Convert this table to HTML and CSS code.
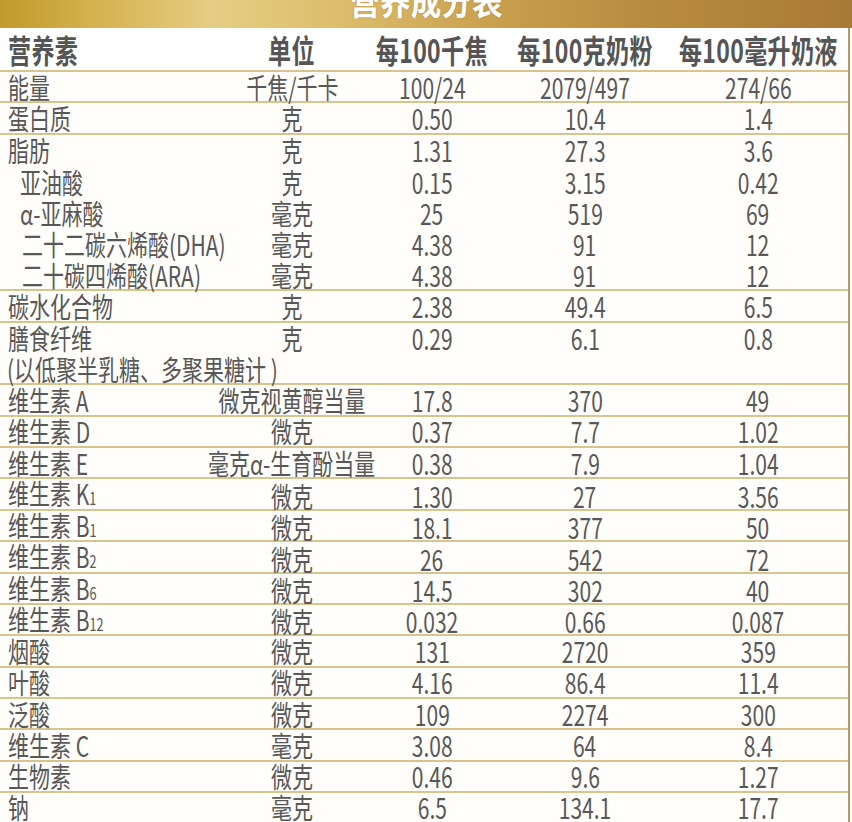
FILE: index.html
```html
<!DOCTYPE html>
<html lang="zh">
<head>
<meta charset="utf-8">
<title>营养成分表</title>
<link rel="stylesheet" href="styles.css">
</head>
<body>
<div class="page">
  <div class="banner"><span class="title">营养成分表</span></div>
  <div class="table">
    <div class="row head sep">
      <div class="c1"><span class="t">营养素</span></div>
      <div class="cc"><span class="t">单位</span></div>
      <div class="cc"><span class="t">每100千焦</span></div>
      <div class="cc"><span class="t">每100克奶粉</span></div>
      <div class="cc"><span class="t">每100毫升奶液</span></div>
    </div>
    <div class="row sep"><div class="c1"><span class="t">能量</span></div><div class="cc"><span class="t">千焦/千卡</span></div><div class="cc"><span class="t">100/24</span></div><div class="cc"><span class="t">2079/497</span></div><div class="cc"><span class="t">274/66</span></div></div>
    <div class="row sep"><div class="c1"><span class="t">蛋白质</span></div><div class="cc"><span class="t">克</span></div><div class="cc"><span class="t">0.50</span></div><div class="cc"><span class="t">10.4</span></div><div class="cc"><span class="t">1.4</span></div></div>
    <div class="row"><div class="c1"><span class="t">脂肪</span></div><div class="cc"><span class="t">克</span></div><div class="cc"><span class="t">1.31</span></div><div class="cc"><span class="t">27.3</span></div><div class="cc"><span class="t">3.6</span></div></div>
    <div class="row"><div class="c1 sub"><span class="t">亚油酸</span></div><div class="cc"><span class="t">克</span></div><div class="cc"><span class="t">0.15</span></div><div class="cc"><span class="t">3.15</span></div><div class="cc"><span class="t">0.42</span></div></div>
    <div class="row"><div class="c1 sub"><span class="t">α-亚麻酸</span></div><div class="cc"><span class="t">毫克</span></div><div class="cc"><span class="t">25</span></div><div class="cc"><span class="t">519</span></div><div class="cc"><span class="t">69</span></div></div>
    <div class="row"><div class="c1 sub2"><span class="t">二十二碳六烯酸(DHA)</span></div><div class="cc"><span class="t">毫克</span></div><div class="cc"><span class="t">4.38</span></div><div class="cc"><span class="t">91</span></div><div class="cc"><span class="t">12</span></div></div>
    <div class="row sep"><div class="c1 sub2"><span class="t">二十碳四烯酸(ARA)</span></div><div class="cc"><span class="t">毫克</span></div><div class="cc"><span class="t">4.38</span></div><div class="cc"><span class="t">91</span></div><div class="cc"><span class="t">12</span></div></div>
    <div class="row sep"><div class="c1"><span class="t">碳水化合物</span></div><div class="cc"><span class="t">克</span></div><div class="cc"><span class="t">2.38</span></div><div class="cc"><span class="t">49.4</span></div><div class="cc"><span class="t">6.5</span></div></div>
    <div class="row"><div class="c1"><span class="t">膳食纤维</span></div><div class="cc"><span class="t">克</span></div><div class="cc"><span class="t">0.29</span></div><div class="cc"><span class="t">6.1</span></div><div class="cc"><span class="t">0.8</span></div></div>
    <div class="row sep"><div class="c1 note"><span class="t">(以低聚半乳糖、多聚果糖计 )</span></div><div class="cc"></div><div class="cc"></div><div class="cc"></div><div class="cc"></div></div>
    <div class="row sep"><div class="c1"><span class="t">维生素 A</span></div><div class="cc"><span class="t">微克视黄醇当量</span></div><div class="cc"><span class="t">17.8</span></div><div class="cc"><span class="t">370</span></div><div class="cc"><span class="t">49</span></div></div>
    <div class="row sep"><div class="c1"><span class="t">维生素 D</span></div><div class="cc"><span class="t">微克</span></div><div class="cc"><span class="t">0.37</span></div><div class="cc"><span class="t">7.7</span></div><div class="cc"><span class="t">1.02</span></div></div>
    <div class="row sep"><div class="c1"><span class="t">维生素 E</span></div><div class="cc"><span class="t">毫克α-生育酚当量</span></div><div class="cc"><span class="t">0.38</span></div><div class="cc"><span class="t">7.9</span></div><div class="cc"><span class="t">1.04</span></div></div>
    <div class="row sep"><div class="c1"><span class="t">维生素 K<small>1</small></span></div><div class="cc"><span class="t">微克</span></div><div class="cc"><span class="t">1.30</span></div><div class="cc"><span class="t">27</span></div><div class="cc"><span class="t">3.56</span></div></div>
    <div class="row sep"><div class="c1"><span class="t">维生素 B<small>1</small></span></div><div class="cc"><span class="t">微克</span></div><div class="cc"><span class="t">18.1</span></div><div class="cc"><span class="t">377</span></div><div class="cc"><span class="t">50</span></div></div>
    <div class="row sep"><div class="c1"><span class="t">维生素 B<small>2</small></span></div><div class="cc"><span class="t">微克</span></div><div class="cc"><span class="t">26</span></div><div class="cc"><span class="t">542</span></div><div class="cc"><span class="t">72</span></div></div>
    <div class="row sep"><div class="c1"><span class="t">维生素 B<small>6</small></span></div><div class="cc"><span class="t">微克</span></div><div class="cc"><span class="t">14.5</span></div><div class="cc"><span class="t">302</span></div><div class="cc"><span class="t">40</span></div></div>
    <div class="row sep"><div class="c1"><span class="t">维生素 B<small>12</small></span></div><div class="cc"><span class="t">微克</span></div><div class="cc"><span class="t">0.032</span></div><div class="cc"><span class="t">0.66</span></div><div class="cc"><span class="t">0.087</span></div></div>
    <div class="row sep"><div class="c1"><span class="t">烟酸</span></div><div class="cc"><span class="t">微克</span></div><div class="cc"><span class="t">131</span></div><div class="cc"><span class="t">2720</span></div><div class="cc"><span class="t">359</span></div></div>
    <div class="row sep"><div class="c1"><span class="t">叶酸</span></div><div class="cc"><span class="t">微克</span></div><div class="cc"><span class="t">4.16</span></div><div class="cc"><span class="t">86.4</span></div><div class="cc"><span class="t">11.4</span></div></div>
    <div class="row sep"><div class="c1"><span class="t">泛酸</span></div><div class="cc"><span class="t">微克</span></div><div class="cc"><span class="t">109</span></div><div class="cc"><span class="t">2274</span></div><div class="cc"><span class="t">300</span></div></div>
    <div class="row sep"><div class="c1"><span class="t">维生素 C</span></div><div class="cc"><span class="t">毫克</span></div><div class="cc"><span class="t">3.08</span></div><div class="cc"><span class="t">64</span></div><div class="cc"><span class="t">8.4</span></div></div>
    <div class="row sep"><div class="c1"><span class="t">生物素</span></div><div class="cc"><span class="t">微克</span></div><div class="cc"><span class="t">0.46</span></div><div class="cc"><span class="t">9.6</span></div><div class="cc"><span class="t">1.27</span></div></div>
    <div class="row last"><div class="c1"><span class="t">钠</span></div><div class="cc"><span class="t">毫克</span></div><div class="cc"><span class="t">6.5</span></div><div class="cc"><span class="t">134.1</span></div><div class="cc"><span class="t">17.7</span></div></div>
  </div>
</div>
</body>
</html>
```

FILE: styles.css
```css
* { box-sizing: border-box; }
html, body { margin: 0; padding: 0; background: #ffffff; }
body {
  font-family: "Noto Sans CJK SC", "Noto Sans", sans-serif;
  color: #585858;
  width: 852px;
  height: 822px;
  overflow: hidden;
}
.page { width: 852px; }
.banner {
  height: 28px;
  overflow: hidden;
  display: flex;
  justify-content: center;
  background: linear-gradient(90deg, #c29a2c 0%, #d6b451 12%, #e6cd84 25%, #dcbd6c 40%, #c9a04e 58%, #b98d40 75%, #a87a37 100%);
}
.title {
  display: block;
  font-size: 34px;
  line-height: 34px;
  height: 34px;
  font-weight: 700;
  color: #fff;
  margin-top: -16px;
  transform: scaleX(0.9);
  text-shadow: 0 0 2px rgba(120,80,20,0.4);
}
.table {
  width: 850px;
  border-right: 2px solid #b9985a;
}
.row {
  display: grid;
  grid-template-columns: 222px 140px 140px 166px 180px;
  height: 31.35px;
  align-items: center;
  font-size: 28px;
  line-height: 28px;
  background: #fffefb;
}
.row.sep { border-bottom: 2px solid #d7c48e; }
.row.head {
  height: 44px;
  background: #ffffff;
  font-weight: 700;
  font-size: 32px;
  line-height: 36px;
  letter-spacing: 0.5px;
  color: #555555;
}
.row.last { height: 29px; }
.c1 { padding-left: 8px; white-space: nowrap; display: flex; }
.c1.sub { padding-left: 20px; }
.c1.sub2 { padding-left: 22px; }
.c1.note { padding-left: 7px; }
.cc { display: flex; justify-content: center; white-space: nowrap; }
.t {
  display: block;
  flex: none;
  transform: scaleX(0.75);
  transform-origin: center center;
}
.c1 .t { transform-origin: left center; }
.head .t { transform: scaleX(0.72); }
small { font-size: 60%; }
```
